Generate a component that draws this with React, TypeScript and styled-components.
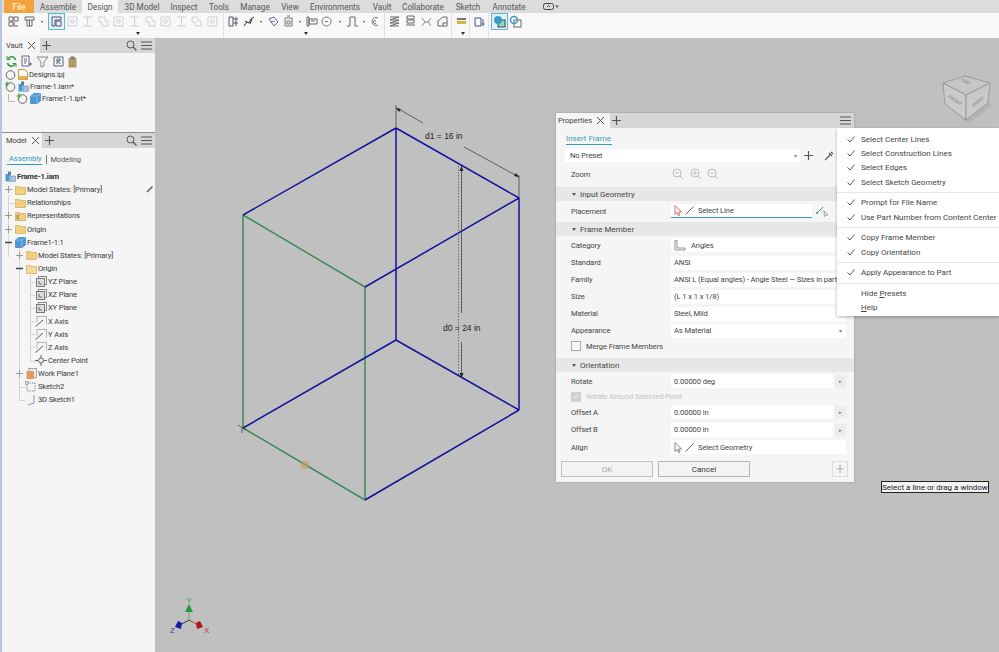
import React from "react";
import styled, { createGlobalStyle } from "styled-components";

const Global = createGlobalStyle`
  html, body { margin: 0; padding: 0; width: 999px; height: 652px; overflow: hidden; background: #c0c0c0; }
  * { box-sizing: border-box; }
  #root { width: 999px; height: 652px; }
`;

const Page = styled.div`
  width: 999px; height: 652px; display: flex; flex-direction: column;
  font-family: Roboto, "Liberation Sans", sans-serif; font-size: 8.2px; color: #333; background: #c0c0c0; overflow: hidden;
`;
const TabBar = styled.div`
  height: 13px; flex: none; display: flex; align-items: stretch; padding-left: 2px; border-left: 2px solid #b9c7dc; background: #dcdcdc; font-size: 8.2px;
`;
const RibTab = styled.div<{ $w: number; $kind?: string }>`
  width: ${p => p.$w}px; flex: none; display: flex; align-items: center; justify-content: center;
  color: ${p => (p.$kind === "file" ? "#fff" : "#555")};
  background: ${p => (p.$kind === "file" ? "#f2a33a" : p.$kind === "active" ? "#f7f7f7" : "transparent")};
`;
const Ribbon = styled.div`
  height: 25px; flex: none; display: flex; align-items: flex-start; padding-left: 4px; border-left: 2px solid #b9c7dc; background: #f8f8f8;
`;
const Body = styled.div`
  flex: 1; display: flex; min-height: 0;
`;
const Side = styled.div`
  width: 155px; flex: none; display: flex; flex-direction: column; background: #f5f5f5; border-left: 2px solid #b9c7dc;
`;
const TabStrip = styled.div`
  height: 15px; flex: none; display: flex; align-items: center; background: #d6d6d6;
  & svg { flex: none; }
`;
const StripTab = styled.div<{ $w: number; $pl?: number }>`
  width: ${p => p.$w}px; height: 100%; flex: none; display: flex; align-items: center; justify-content: space-between; gap: 4px;
  padding: 0 5px 0 ${p => p.$pl ?? 4}px; background: #f5f5f5; color: #444; font-size: 7.6px; letter-spacing: -0.1px;
`;
const StripIcons = styled.div`
  margin-left: auto; display: flex; align-items: center; gap: 4px; padding-right: 3px;
`;
const VaultPane = styled.div`
  height: 79px; flex: none; padding: 2px 0 0 2px; display: flex; flex-direction: column;
`;
const VaultTools = styled.div`
  display: flex; gap: 3px; height: 13px; padding-left: 2px; align-items: center;
`;
const VaultRow = styled.div<{ $i?: number }>`
  height: 12px; display: flex; align-items: center; gap: 1px; padding-left: ${p => p.$i ?? 0}px; font-size: 7.6px; letter-spacing: -0.15px; color: #3a3a3a; white-space: nowrap;
`;
const TreeRow = styled.div<{ $i: number }>`
  height: 13.15px; display: flex; align-items: center; gap: 1px; padding-left: ${p => p.$i}px; font-size: 7.6px; letter-spacing: -0.15px; color: #3a3a3a; white-space: nowrap; position: relative;
`;
const Divider = styled.div`
  height: 1px; flex: none; background: #8f8f8f;
`;
const ModelPane = styled.div`
  flex: 1; display: flex; flex-direction: column; min-height: 0;
`;
const SubTabs = styled.div`
  height: 22px; flex: none; display: flex; align-items: center; padding-left: 5px; font-size: 7.6px; letter-spacing: -0.1px; color: #555;
`;
const SubActive = styled.span`
  color: #2f9bb8; border-bottom: 1px solid #2f9bb8; padding: 0 1px 1px 2px; margin-right: 4px;
`;
const SubOther = styled.span`
  border-left: 1px solid #777; padding-left: 3px;
`;
const Tree = styled.div`
  display: flex; flex-direction: column; position: relative;
`;
const TreeLine = styled.span<{ $x: number; $y: number; $w: number; $h: number }>`
  position: absolute; left: ${p => p.$x}px; top: ${p => p.$y}px; width: ${p => p.$w}px; height: ${p => p.$h}px; background: #d4d4d4;
`;
const RootName = styled.span`
  font-weight: 700; color: #333;
`;
const Pencil = styled.span`
  position: absolute; right: 1px; top: 2px; display: flex;
`;
const Canvas = styled.div`
  flex: 1; position: relative; background: #c0c0c0;
`;
const Drawing = styled.svg`
  position: absolute; left: 0; top: 0; width: 844px; height: 614px;
`;
const DrawLabel = styled.text`
  font-family: "Liberation Sans", sans-serif; font-size: 8.5px; fill: #222;
`;
const Panel = styled.div`
  position: absolute; left: 401px; top: 75px; width: 298px; height: 369px; display: flex; flex-direction: column; background: #f5f5f5;
  box-shadow: 0 0 2px rgba(0,0,0,.25);
`;
const PanelBody = styled.div`
  flex: 1; display: flex; flex-direction: column; padding-top: 2px;
`;
const PanelTitleWrap = styled.div`
  height: 15px; flex: none; padding-left: 10px; display: flex; align-items: flex-end; font-size: 8px;
`;
const PanelTitle = styled.span`
  color: #3a9cb8; border-bottom: 1px solid #3a9cb8; padding: 0 1px 0 0; line-height: 11px;
`;
const PresetRow = styled.div`
  display: flex; align-items: center; flex: none; height: 13px; margin: 4px 0 0 9px; gap: 4px;
`;
const Preset = styled.div`
  width: 235px; height: 13px; background: #fff; display: flex; align-items: center; justify-content: space-between; padding: 0 3px 0 5px; color: #444; font-size: 7.6px; letter-spacing: -0.1px;
`;
const Row = styled.div<{ $h?: number }>`
  height: ${p => p.$h ?? 17}px; flex: none; display: flex; align-items: center; padding-left: 15px; font-size: 7.6px; letter-spacing: -0.1px; color: #444;
`;
const Label = styled.span`
  width: 100px; flex: none;
`;
const Section = styled.div<{ $mt?: number }>`
  height: 14px; flex: none; margin-top: ${p => p.$mt ?? 1}px; display: flex; align-items: center; gap: 4px; padding-left: 16px; background: #e7e7e7; font-size: 8px; color: #444;
`;
const Caret = styled.span`
  width: 0; height: 0; border-left: 2.5px solid transparent; border-right: 2.5px solid transparent; border-top: 3.5px solid #555;
`;
const Field = styled.div<{ $w?: number; $focus?: boolean }>`
  width: ${p => p.$w ?? 175}px; height: 14px; flex: none; display: flex; align-items: center; gap: 2px; padding: 0 4px 0 3px; background: #fff; color: #444; white-space: nowrap;
  border-bottom: ${p => (p.$focus ? "1px solid #3a9cb8" : "none")};
`;
const Spin = styled.div`
  width: 11px; height: 12px; margin-left: 2px; flex: none; display: flex; align-items: center; justify-content: center; background: #ececec; color: #777; font-size: 5px;
`;
const Dropdown = styled.span`
  margin-left: auto; color: #888; font-size: 6px;
`;
const CheckBox = styled.span<{ $on?: boolean }>`
  width: 10px; height: 10px; flex: none; margin-right: 5px; border: 1px solid ${p => (p.$on ? "#d0d0d0" : "#aaa")}; background: ${p => (p.$on ? "#d0d0d0" : "#f8f8f8")}; display: flex; align-items: center; justify-content: center; color: #f5f5f5; font-size: 8px;
`;
const Disabled = styled.span`
  color: #c4c4c4;
`;
const Buttons = styled.div`
  display: flex; align-items: center; margin: 5px 0 0 5px; gap: 5px;
`;
const Btn = styled.div<{ $off?: boolean }>`
  width: 92px; height: 16px; display: flex; align-items: center; justify-content: center; background: #f3f3f3; border: 1px solid ${p => (p.$off ? "#b8c4c8" : "#b5b5b5")}; color: ${p => (p.$off ? "#aaa" : "#333")}; font-size: 8px;
`;
const PlusBox = styled.div`
  width: 16px; height: 16px; margin-left: auto; margin-right: 6px; display: flex; align-items: center; justify-content: center; border: 1px solid #ddd; color: #bbb; font-size: 15px; line-height: 1;
`;
const Menu = styled.div`
  position: absolute; left: 682px; top: 90px; width: 162px; height: 188px; background: #fff; box-shadow: 0 1px 3px rgba(0,0,0,.3); padding-top: 4px; font-size: 8px; color: #444; display: flex; flex-direction: column;
`;
const MenuItem = styled.div`
  height: 14.4px; flex: none; display: flex; align-items: center; padding-left: 10px; white-space: nowrap;
`;
const Tick = styled.span`
  width: 14px; flex: none; display: flex; align-items: center;
`;
const MenuSep = styled.div`
  height: 1px; flex: none; background: #e6e6e6; margin: 2.600px 0 2.600px;
`;
const Tip = styled.div`
  position: absolute; left: 726px; top: 443px; height: 12px; width: 108px; display: flex; align-items: center; justify-content: center; background: #f3f3f3; border: 1px solid #222; font-size: 8px; color: #222; white-space: nowrap;
`;

const Close = () => <svg width="9" height="9" viewBox="0 0 9 9"><path d="M1 1l7 7M8 1L1 8" stroke="#555" strokeWidth="1" /></svg>;
const Plus = () => <svg width="9" height="9" viewBox="0 0 9 9"><path d="M4.5 0v9M0 4.5h9" stroke="#555" strokeWidth="1.2" /></svg>;
const Search = () => <svg width="11" height="11" viewBox="0 0 11 11" fill="none"><circle cx="4.5" cy="4.5" r="3.5" stroke="#555" /><path d="M7 7l3.5 3.5" stroke="#555" strokeWidth="1.2" /></svg>;
const Burger = () => <svg width="11" height="9" viewBox="0 0 11 9"><path d="M0 1h11M0 4.500h11M0 8h11" stroke="#555" /></svg>;
const Check = () => <svg width="8" height="7" viewBox="0 0 8 7" fill="none"><path d="M.5 3.500L3 6 7.500.5" stroke="#555" /></svg>;

const Folder = ({ open, tag }: { open?: boolean; tag?: boolean }) => (
  <svg width="11" height="10" viewBox="0 0 11 10">
    <path d="M.5 1.500h4l1 1h5v7h-10z" fill={open ? "#f3d99a" : "#f0d07c"} stroke="#c9a24a" strokeWidth=".6" />
    {tag && <path d="M2 4h3M2 4v4h3M2 6h2" stroke="#665" strokeWidth=".6" fill="none" />}
  </svg>
);
const PlaneIcon = () => (
  <svg width="11" height="11" viewBox="0 0 11 11" fill="none">
    <rect x="2.500" y=".5" width="8" height="8" stroke="#888" />
    <rect x=".5" y="2.500" width="8" height="8" fill="#ddd" stroke="#777" />
    <path d="M3 5v3h3" stroke="#666" />
  </svg>
);
const AxisIcon = () => (
  <svg width="12" height="11" viewBox="0 0 12 11" fill="none">
    <path d="M2 .5h9.500v8M2 .5v6" stroke="#999" strokeWidth=".7" />
    <path d="M.5 10.500L8 4" stroke="#555" />
  </svg>
);
const PointIcon = () => (
  <svg width="12" height="11" viewBox="0 0 12 11" fill="none">
    <circle cx="6" cy="5.500" r="2.500" stroke="#666" />
    <path d="M6 0v3M6 8v3M0 5.500h3.500M8.500 5.500H12" stroke="#666" />
  </svg>
);
const PartIcon = () => (
  <svg width="11" height="11" viewBox="0 0 11 11">
    <path d="M.5 3L4 .5h6.500V8L7 10.500H.5z" fill="#4a9ad8" stroke="#2d78b5" strokeWidth=".6" />
    <path d="M.5 3H7v7.500M7 3l3.500-2.500" stroke="#a9d3f0" strokeWidth=".6" fill="none" />
  </svg>
);
const AsmIcon = () => (
  <svg width="11" height="11" viewBox="0 0 11 11">
    <rect x=".5" y="3" width="4" height="7.500" fill="#4a9ad8" />
    <rect x="3" y=".5" width="3" height="4" fill="#5d7ea8" />
    <rect x="5" y="5" width="5.500" height="5.500" fill="#a9c4e0" stroke="#5d7ea8" strokeWidth=".5" />
  </svg>
);
const Status = ({ add }: { add?: boolean }) => (
  <svg width="13" height="11" viewBox="0 0 13 11" fill="none">
    <circle cx="6.500" cy="6" r="4.300" stroke="#444" strokeWidth=".8" />
    {add && <path d="M3 .5v5M.5 3h5" stroke="#3aa03a" strokeWidth="1.200" />}
  </svg>
);
const Expand = ({ minus }: { minus?: boolean }) => (
  <svg width="7" height="7" viewBox="0 0 7 7"><path d={minus ? "M0 3.500h7" : "M0 3.500h7M3.500 0v7"} stroke={minus ? "#444" : "#999"} strokeWidth={minus ? 1.5 : 1} /></svg>
);
const Gap = styled.span<{ $w: number }>`
  width: ${p => p.$w}px; flex: none; display: flex; align-items: center;
`;
const ArrowCursor = ({ red }: { red?: boolean }) => (
  <svg width="9" height="11" viewBox="0 0 9 11"><path d="M1 .5L7.500 7H4.500L6 10 4.500 10.500 3 7.500 1 9.500z" fill="#fff" stroke={red ? "#d04a4a" : "#666"} strokeWidth=".8" /></svg>
);
const Slash = () => <svg width="9" height="9" viewBox="0 0 9 9"><path d="M.5 8.500L8.500.5" stroke="#666" /></svg>;

const RibbonGroup = styled.div<{ $w: number; $pl?: number; $gap?: number; $line?: boolean }>`
  width: ${p => p.$w}px; height: 25px; flex: none; position: relative; display: flex; align-items: flex-start; padding: 1px 0 0 ${p => p.$pl ?? 0}px; gap: ${p => p.$gap ?? 0}px;
  border-right: ${p => (p.$line ? "1px solid #e2e2e2" : "none")};
`;
const RibIconBox = styled.span<{ $on?: boolean }>`
  width: 15px; height: 15px; flex: none; display: flex; align-items: center; justify-content: center;
  background: ${p => (p.$on ? "#e3f1f6" : "transparent")}; outline: ${p => (p.$on ? "1px solid #62b4cf" : "none")};
`;
const DropTri = styled.span`
  position: absolute; bottom: 3px; left: 50%; width: 0; height: 0; border-left: 2.5px solid transparent; border-right: 2.5px solid transparent; border-top: 3px solid #333;
`;
const DropDot = styled.span<{ $w: number }>`
  width: ${p => p.$w}px; height: 15px; flex: none; display: flex; align-items: center; justify-content: center;
  &::after { content: ""; border-left: 1.500px solid transparent; border-right: 1.500px solid transparent; border-top: 2px solid #444; }
`;
const RibIcon = ({ faint, d, color }: { faint?: boolean; d?: string; color?: string }) => (
  <svg width="13" height="13" viewBox="0 0 13 13" fill="none">
    <path d={d ?? "M2 2h5v4H2zM7 6h4v5H7zM4 6v5h3"} stroke={color ?? (faint ? "#cfcfcf" : "#666")} strokeWidth="1" />
  </svg>
);

const tabs: [string, number, string?][] = [
  ["File", 30, "file"], ["Assemble", 48], ["Design", 36, "active"], ["3D Model", 48], ["Inspect", 36], ["Tools", 34], ["Manage", 38], ["View", 32],
  ["Environments", 58], ["Vault", 36], ["Collaborate", 46], ["Sketch", 44], ["Annotate", 38],
];

const CUBE_BLUE = "#12129c";
const GREEN = "#3e8a5a";

const Svgs = () => (
  <Drawing viewBox="155 38 844 614">
    <g fill="none" strokeWidth="1.500">
      <g stroke={GREEN}>
        <path d="M243 215V428M243 428L365 500M365 287V500M243 215L365 287" />
      </g>
      <g stroke={CUBE_BLUE}>
        <path d="M396 128L243 215M396 128L519 198M396 128V340M519 198L365 287M519 198V410M243 428L396 340M396 340L519 410M365 500L519 410" />
      </g>
    </g>
    <g fill="none" stroke="#333" strokeWidth=".7">
      <path d="M396 105V128M519 175V198M397 108L423 123M464 147L519 177M461.500 166V313M461.500 342V378" />
      <path d="M458.500 166V376" strokeDasharray="1.500 1.500" stroke="#445" />
      <path d="M238 425L246 430M242 428v5" />
    </g>
    <path d="M396 108l5 1-2 3zM519 177l-5-1 2-3zM461.500 166l2 5h-4zM461.500 378l2-5h-4z" fill="#222" />
    <DrawLabel x="425" y="139">d1 = 16 in</DrawLabel>
    <DrawLabel x="443" y="331">d0 = 24 in</DrawLabel>
    <circle cx="305" cy="465" r="3.500" fill="#d2a356" fillOpacity=".55" stroke="#c8873c" strokeOpacity=".5" />
    <g transform="translate(189 620)">
      <path d="M0 0V-10" stroke="#6fb26f" strokeWidth="1.200" />
      <path d="M0 0L-9 5" stroke="#334" strokeWidth="1" />
      <path d="M0 0L9 5" stroke="#a44" strokeWidth="1" />
      <path d="M-4 -8L0 -16 4 -8z" fill="#1e9a3c" />
      <path d="M-11 1L-7 3-8 9-14 7z" fill="#1c1ca0" />
      <path d="M11 1L7 3 8 9 14 7z" fill="#b01818" />
      <text x="-2.500" y="-17" fontSize="8" fill="#38a34a" fontFamily="Liberation Sans">Y</text>
      <text x="-19" y="13" fontSize="8" fill="#3a3aa0" fontFamily="Liberation Sans">Z</text>
      <text x="15" y="13" fontSize="8" fill="#b03030" fontFamily="Liberation Sans">X</text>
    </g>
    <g>
      <path d="M950 108L968 124 992 106 985 98 968 112z" fill="#000" opacity=".06" />
      <path d="M943 83L965 76 990 83 966 95z" fill="#c6c6c6" stroke="#8a8a8a" strokeWidth=".7" />
      <path d="M943 83L966 95V120L945 104z" fill="#cbcbcb" stroke="#8a8a8a" strokeWidth=".7" />
      <path d="M966 95L990 83 988 103 966 120z" fill="#c9c9c9" stroke="#8a8a8a" strokeWidth=".7" />
      <text x="961" y="83" fontSize="4.500" fill="#777" fontFamily="Liberation Sans" transform="rotate(22 965 81)">TOP</text>
      <text x="947" y="102" fontSize="4.500" fill="#777" fontFamily="Liberation Sans" transform="rotate(32 955 101)">FRONT</text>
      <text x="971" y="103" fontSize="4.500" fill="#777" fontFamily="Liberation Sans" transform="rotate(-38 978 101)">RIGHT</text>
    </g>
  </Drawing>
);

const rows = {
  a: ["YZ Plane", "XZ Plane", "XY Plane"],
  b: ["X Axis", "Y Axis", "Z Axis"],
};

const faintCount = Array.from({ length: 10 }, (_, i) => i);

const lines: [number, number, number, number][] = [
  [6, 25, 1, 62], [6, 33, 6, 1],
  [17, 78, 1, 152], [17, 217, 6, 1], [17, 230, 6, 1],
  [28, 105, 1, 86], [28, 112, 5, 1], [28, 125, 5, 1], [28, 138, 5, 1], [28, 151, 5, 1], [28, 164, 5, 1], [28, 177, 5, 1], [28, 191, 5, 1],
];

export default function App() {
  return (
    <Page>
      <Global />
      <TabBar>
        {tabs.map(([t, w, k]) => <RibTab key={t} $w={w} $kind={k}>{t}</RibTab>)}
        <RibTab $w={46}><svg width="16" height="7" viewBox="0 0 16 7" fill="none"><rect x=".5" y=".5" width="10" height="6" rx="2" stroke="#444" /><path d="M4 4l1.500-1.500L7 4" stroke="#444" /><path d="M12.500 2.500h3L14 5z" fill="#444" /></svg></RibTab>
      </TabBar>
      <Ribbon>
        <RibbonGroup $w={43} $gap={1}>
          <RibIconBox><RibIcon d="M2 2h4v4H2zM7 2h4v4H7zM2 7h4v4H2zM7 7v4h4" /></RibIconBox>
          <RibIconBox><RibIcon d="M2 2h9v3H2zM4 5v6h5V5M6.500 5v6" /></RibIconBox>
          <DropDot $w={8} />
        </RibbonGroup>
        <RibbonGroup $w={175} $gap={0.6} $line>
          <RibIconBox $on><RibIcon d="M2 2h9v3H5v6H2zM6 6h5v5H6z" color="#557" /></RibIconBox>
          {faintCount.map(i => <RibIconBox key={i}><RibIcon faint d={i % 3 === 0 ? "M2 2h9v9H2zM5 5h3v3H5z" : i % 3 === 1 ? "M2 2h9M6.500 2v9M2 11h9" : "M2 2h6v4h3v5H5V7H2z"} /></RibIconBox>)}
          <DropTri />
        </RibbonGroup>
        <RibbonGroup $w={161} $pl={2} $line>
          <RibIconBox><RibIcon d="M2 2h4v9H2zM6 4h5M6 8h5M9 2v9" color="#556" /></RibIconBox>
          <RibIconBox><RibIcon d="M2 11l3-4 2 1 2-4 3-2M3 6l2 1M8 9l2-5" color="#333" /></RibIconBox>
          <DropDot $w={10} />
          <RibIconBox><RibIcon d="M2 4l5-2 4 5-4 4zM4 7a3 3 0 0 1 4 0" color="#668" /></RibIconBox>
          <RibIconBox><RibIcon d="M3 3h7v8H3zM5 1h3M5 6h3v3H5z" color="#777" /></RibIconBox>
          <DropDot $w={8} />
          <RibIconBox><RibIcon d="M2 2h2v9H2zM4 4h8v5H4zM6 6h4" color="#666" /></RibIconBox>
          <RibIconBox><RibIcon d="M2 6.500a4.500 4.500 0 1 0 9 0a4.500 4.500 0 1 0-9 0M5 6.500h3" color="#777" /></RibIconBox>
          <DropDot $w={11} />
          <RibIconBox><RibIcon d="M1 11h3V2h5v9h3" color="#666" /></RibIconBox>
          <DropDot $w={7} />
          <RibIconBox><RibIcon d="M10 3a4 4 0 1 0 0 7M8 6a1.500 1.500 0 1 0 0 2" color="#777" /></RibIconBox>
          <DropTri />
        </RibbonGroup>
        <RibbonGroup $w={67} $pl={2} $gap={1} $line>
          <RibIconBox><RibIcon d="M2 2h9L2 5h9L2 8h9L2 11h9" /></RibIconBox>
          <RibIconBox><RibIcon d="M3 1h7v3H3zM3 5h7v3H3zM2 10h9" /></RibIconBox>
          <RibIconBox><RibIcon d="M2 3l3 4h3l3-4M2 11l3-4M8 7l3 4" color="#888" /></RibIconBox>
          <RibIconBox><RibIcon d="M2 11V6l5-4h4v9zM7 11V8h4" /></RibIconBox>
        </RibbonGroup>
        <RibbonGroup $w={18} $pl={1.5} $line>
          <RibIconBox><svg width="13" height="13" viewBox="0 0 13 13"><rect x="2" y="3" width="9" height="2" fill="#777" /><rect x="2" y="6" width="9" height="3" fill="#d8b23a" /></svg></RibIconBox>
          <DropTri />
        </RibbonGroup>
        <RibbonGroup $w={19} $pl={2} $line>
          <RibIconBox><RibIcon d="M2 3h6v8H2zM10 4v7M8.500 9h3" color="#458" /></RibIconBox>
        </RibbonGroup>
        <RibbonGroup $w={44} $pl={3} $gap={1}>
          <RibIconBox $on><svg width="13" height="13" viewBox="0 0 13 13"><rect x="5" y="5" width="7" height="7" fill="#8db" stroke="#444" /><circle cx="5" cy="5" r="4" fill="#3a9ad0" /></svg></RibIconBox>
          <RibIconBox><svg width="13" height="13" viewBox="0 0 13 13" fill="none"><rect x="5" y="5" width="7" height="7" stroke="#666" /><circle cx="5" cy="5" r="3.500" stroke="#3a9ad0" strokeWidth="1.500" /></svg></RibIconBox>
        </RibbonGroup>
      </Ribbon>
      <Body>
        <Side>
          <TabStrip>
            <StripTab $w={38}>Vault <Close /></StripTab>
            <Gap $w={2} />
            <Plus />
            <StripIcons><Search /><Burger /></StripIcons>
          </TabStrip>
          <VaultPane>
            <VaultTools>
              <svg width="11" height="11" viewBox="0 0 11 11" fill="none"><path d="M9.500 4A4 4 0 0 0 2 3M1.500 7A4 4 0 0 0 9 8" stroke="#2f9a3e" strokeWidth="1.500" /><path d="M1 0v3.500h3.500M10 11V7.500H6.500" stroke="#2f9a3e" /></svg>
              <RibIcon d="M2 1h7v10H2zM4 4h3M4 6h3M4 8h2M9 9h3M10.500 7.500v3" color="#668" />
              <RibIcon d="M1 2h11L8 7v4L5 12V7z" color="#888" />
              <RibIcon d="M2 2h9v9H2zM5 4v5M5 4h3v2H5M8 9L6 6" color="#567" />
              <svg width="9" height="12" viewBox="0 0 9 12"><rect x=".5" y="2" width="8" height="9.500" fill="#b09a66" /><rect x="2.500" y=".5" width="4" height="2.500" fill="#777" /></svg>
            </VaultTools>
            <VaultRow><Status /><svg width="10" height="11" viewBox="0 0 10 11"><path d="M.5.500h6l3 3v7H.5z" fill="#fff" stroke="#c99a3c" /><rect x=".5" y="7" width="9" height="3.500" fill="#eab04c" /></svg>Designs.ipj</VaultRow>
            <VaultRow><Status add /><AsmIcon />Frame-1.iam*</VaultRow>
            <VaultRow $i={4}><svg width="7" height="8" viewBox="0 0 7 8"><path d="M.5 0v7.500H7" stroke="#bbb" fill="none" /></svg><Status add /><PartIcon />Frame1-1.ipt*</VaultRow>
          </VaultPane>
          <Divider />
          <TabStrip>
            <StripTab $w={40}>Model <Close /></StripTab>
            <Gap $w={3} />
            <Plus />
            <StripIcons><Search /><Burger /></StripIcons>
          </TabStrip>
          <ModelPane>
            <SubTabs><SubActive>Assembly</SubActive><SubOther>Modeling</SubOther></SubTabs>
            <Tree>
              {lines.map(([x, y, w, h]) => <TreeLine key={`${x}-${y}`} $x={x} $y={y} $w={w} $h={h} />)}
              <TreeRow $i={3}><AsmIcon /><RootName>Frame-1.iam</RootName></TreeRow>
              <TreeRow $i={3}><Expand /><Gap $w={1} /><Folder />Model States: [Primary]<Pencil><svg width="8" height="8" viewBox="0 0 8 8"><path d="M.5 7.500l1.500-.5 5-5-1-1-5 5z" fill="#555" /></svg></Pencil></TreeRow>
              <TreeRow $i={13}><Folder />Relationships</TreeRow>
              <TreeRow $i={3}><Expand /><Gap $w={1} /><Folder tag />Representations</TreeRow>
              <TreeRow $i={3}><Expand /><Gap $w={1} /><Folder />Origin</TreeRow>
              <TreeRow $i={3}><Expand minus /><Gap $w={1} /><PartIcon />Frame1-1:1</TreeRow>
              <TreeRow $i={14}><Expand /><Gap $w={1} /><Folder />Model States: [Primary]</TreeRow>
              <TreeRow $i={14}><Expand minus /><Gap $w={1} /><Folder open />Origin</TreeRow>
              {rows.a.map(t => <TreeRow key={t} $i={34}><PlaneIcon />{t}</TreeRow>)}
              {rows.b.map(t => <TreeRow key={t} $i={33}><AxisIcon />{t}</TreeRow>)}
              <TreeRow $i={33}><PointIcon />Center Point</TreeRow>
              <TreeRow $i={14}><Expand /><Gap $w={1} /><svg width="11" height="12" viewBox="0 0 11 12"><rect x="3" y=".5" width="7.500" height="9" fill="#eee" stroke="#888" strokeWidth=".7" /><rect x=".5" y="3" width="7.500" height="8" fill="#e69a5c" /></svg>Work Plane1</TreeRow>
              <TreeRow $i={23}><svg width="12" height="12" viewBox="0 0 12 12" fill="none"><rect x="2" y="2" width="8" height="8" stroke="#6a93b8" strokeDasharray="1.500 1" /><rect x=".5" y=".5" width="3" height="3" fill="#cde" stroke="#777" strokeWidth=".5" /></svg>Sketch2</TreeRow>
              <TreeRow $i={23}><svg width="12" height="12" viewBox="0 0 12 12" fill="none"><path d="M9 1v8L3 11" stroke="#5a83b0" strokeWidth=".8" /></svg>3D Sketch1</TreeRow>
            </Tree>
          </ModelPane>
        </Side>
        <Canvas>
          <Svgs />
          <Panel>
            <TabStrip>
              <StripTab $w={54} $pl={2}>Properties <Close /></StripTab>
              <Gap $w={2} />
              <Plus />
              <StripIcons><Burger /></StripIcons>
            </TabStrip>
            <PanelBody>
              <PanelTitleWrap><PanelTitle>Insert Frame</PanelTitle></PanelTitleWrap>
              <PresetRow>
                <Preset>No Preset<Dropdown>▾</Dropdown></Preset>
                <Plus />
                <Gap $w={3} />
                <svg width="10" height="10" viewBox="0 0 10 10"><path d="M1 9l5-5M5 2l3 3M7 1l2 2" stroke="#555" strokeWidth="1.200" /></svg>
              </PresetRow>
              <Row $h={24}>
                <Label>Zoom</Label>
                <svg width="50" height="12" viewBox="0 0 50 12" fill="none" stroke="#bdbdbd"><circle cx="6" cy="5" r="4" /><path d="M9 8l3 3M4 5h4" /><circle cx="24" cy="5" r="4" /><path d="M27 8l3 3M22 5h4M24 3v4" /><circle cx="41" cy="5" r="4" /><path d="M44 8l3 3M39 5h4" /></svg>
              </Row>
              <Section><Caret />Input Geometry</Section>
              <Row $h={20}>
                <Label>Placement</Label>
                <Field $w={141} $focus><ArrowCursor red /><Slash /><Gap $w={0} />Select Line</Field>
                <Gap $w={4} />
                <svg width="14" height="12" viewBox="0 0 14 12" fill="none"><path d="M1 8l6-6" stroke="#397" /><circle cx="1" cy="8" r="1" fill="#397" /><path d="M8 6l4 4H9.500l-1 1.500z" fill="#fff" stroke="#666" strokeWidth=".6" /></svg>
              </Row>
              <Section><Caret />Frame Member</Section>
              <Row $h={18}>
                <Label>Category</Label>
                <Field><svg width="12" height="11" viewBox="0 0 12 11" fill="none"><path d="M1 0v10h10V8H3V0z" stroke="#777" strokeWidth=".8" /></svg><Gap $w={1} />Angles<Dropdown>▾</Dropdown></Field>
              </Row>
              <Row><Label>Standard</Label><Field>ANSI<Dropdown>▾</Dropdown></Field></Row>
              <Row><Label>Family</Label><Field>ANSI L (Equal angles) - Angle Steel — Sizes in parts</Field></Row>
              <Row><Label>Size</Label><Field>(L 1 x 1 x 1/8)</Field></Row>
              <Row><Label>Material</Label><Field>Steel, Mild</Field></Row>
              <Row><Label>Appearance</Label><Field>As Material<Dropdown>▾</Dropdown></Field></Row>
              <Row $h={14}><CheckBox />Merge Frame Members</Row>
              <Section $mt={5}><Caret />Orientation</Section>
              <Row $h={18}><Label>Rotate</Label><Field $w={162}>0.00000 deg</Field><Spin>▸</Spin></Row>
              <Row $h={13}><CheckBox $on>✓</CheckBox><Disabled>Rotate Around Selected Point</Disabled></Row>
              <Row $h={18}><Label>Offset A</Label><Field $w={162}>0.00000 in</Field><Spin>▸</Spin></Row>
              <Row><Label>Offset B</Label><Field $w={162}>0.00000 in</Field><Spin>▸</Spin></Row>
              <Row $h={18}><Label>Align</Label><Field><ArrowCursor /><Slash /><Gap $w={0} />Select Geometry</Field></Row>
              <Buttons>
                <Btn $off>OK</Btn>
                <Btn>Cancel</Btn>
                <PlusBox>+</PlusBox>
              </Buttons>
            </PanelBody>
          </Panel>
          <Menu>
            {["Select Center Lines", "Select Construction Lines", "Select Edges", "Select Sketch Geometry"].map(t => <MenuItem key={t}><Tick><Check /></Tick>{t}</MenuItem>)}
            <MenuSep />
            {["Prompt for File Name", "Use Part Number from Content Center"].map(t => <MenuItem key={t}><Tick><Check /></Tick>{t}</MenuItem>)}
            <MenuSep />
            {["Copy Frame Member", "Copy Orientation"].map(t => <MenuItem key={t}><Tick><Check /></Tick>{t}</MenuItem>)}
            <MenuSep />
            <MenuItem><Tick><Check /></Tick>Apply Appearance to Part</MenuItem>
            <MenuSep />
            <MenuItem><Tick /><span>Hide <u>P</u>resets</span></MenuItem>
            <MenuItem><Tick /><span><u>H</u>elp</span></MenuItem>
          </Menu>
          <Tip>Select a line or drag a window</Tip>
        </Canvas>
      </Body>
    </Page>
  );
}
